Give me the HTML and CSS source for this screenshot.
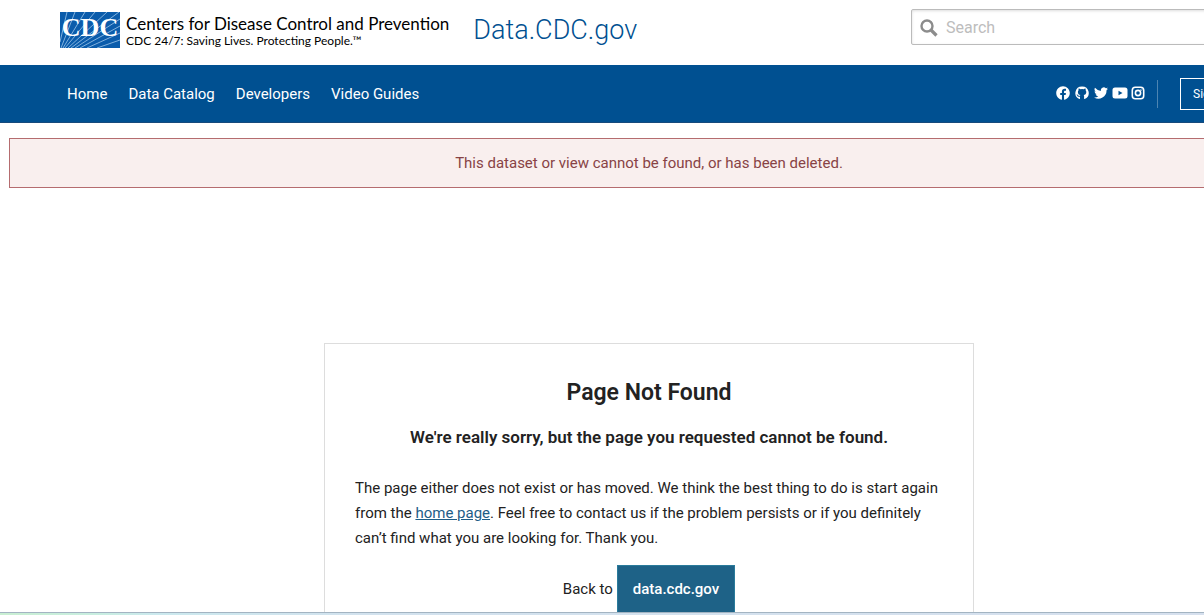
FILE: index.html
```html
<!DOCTYPE html>
<html lang="en">
<head>
<meta charset="utf-8">
<title>Data.CDC.gov</title>
<link rel="stylesheet" href="styles.css">
</head>
<body>
<div class="viewport">
<div class="page">
  <header class="masthead">
    <a class="brand" href="#">
      <svg class="logo" viewBox="0 0 60 36" aria-label="CDC">
        <rect width="60" height="36" fill="#0b5cab"/>
        <g stroke="#8fbbe3" stroke-width=".9">
          <path d="M0 30 7 0M1 36 15 0M3 36 25 0M5 36 35 0M8 36 47 0M11 36 59 0M15 36 60 7M20 36 60 14M27 36 60 21M37 36 60 28"/>
        </g>
        <text x="30" y="24" text-anchor="middle" class="logo-text">CDC</text>
      </svg>
      <span class="brand-lines">
        <span class="agency">Centers for Disease Control and Prevention</span>
        <span class="tagline">CDC 24/7: Saving Lives. Protecting People.™</span>
      </span>
      <span class="site-name">Data.CDC.gov</span>
    </a>
    <form class="search">
      <svg class="search-icon" viewBox="0 0 18 18" aria-hidden="true"><circle cx="7" cy="7" r="5.5" fill="none" stroke="#8c8c8c" stroke-width="2.4"/><path d="m11 11 5.5 5.5" stroke="#8c8c8c" stroke-width="3.2"/></svg>
      <input class="search-input" type="search" placeholder="Search" aria-label="Search">
    </form>
  </header>
  <nav class="navbar">
    <div class="nav-links">
      <a href="#">Home</a><a href="#">Data Catalog</a><a href="#">Developers</a><a href="#">Video Guides</a>
    </div>
    <div class="social">
      <a href="#" aria-label="Facebook"><svg viewBox="0 0 512 512"><path d="M504 256C504 119 393 8 256 8S8 119 8 256c0 124 91 226 209 245V328h-63v-72h63v-55c0-62 37-96 94-96 27 0 55 5 55 5v61h-31c-31 0-41 19-41 39v46h69l-11 72h-58v173c119-19 210-121 210-245z"/></svg></a>
      <a href="#" aria-label="GitHub"><svg viewBox="0 0 16 16"><path d="M8 .5a7.5 7.5 0 0 0-3 14.4c.4.1.7-.2.7-.6v-2c-2 .4-2.800-.6-3-1.300-.2-.5-.6-.9-.9-1.100.8-.4 1.500.2 1.800.7.5.8 1.300.9 2.100.6.1-.5.300-.8.5-1C4.500 10 3.300 9.200 3.300 6.900c0-.8.3-1.500.8-2-.1-.5-.2-1.200.1-2 .8-.1 1.600.4 2.100.8a7 7 0 0 1 3.600 0c.5-.4 1.300-.9 2.100-.8.300.8.2 1.500.1 2 .5.5.8 1.200.8 2 0 2.300-1.200 3.100-3 3.300.3.300.5.8.5 1.500v2.600c0 .4.3.7.7.600A7.500 7.500 0 0 0 8 .5z"/></svg></a>
      <a href="#" aria-label="Twitter"><svg viewBox="0 0 24 24"><path d="M24 4.600a10 10 0 0 1-2.800.8 5 5 0 0 0 2.200-2.700 10 10 0 0 1-3.100 1.200 4.900 4.900 0 0 0-8.400 4.500A14 14 0 0 1 1.700 3.200a4.900 4.900 0 0 0 1.500 6.500 5 5 0 0 1-2.200-.6 4.900 4.900 0 0 0 3.900 4.900 5 5 0 0 1-2.200.1 4.900 4.900 0 0 0 4.600 3.400A9.900 9.900 0 0 1 0 19.500a14 14 0 0 0 21.500-12.400A10 10 0 0 0 24 4.600z"/></svg></a>
      <a href="#" aria-label="YouTube" class="wide"><svg viewBox="0 0 16 14"><path fill-rule="evenodd" d="M3 1.500h10a2.500 2.500 0 0 1 2.500 2.500v6a2.500 2.500 0 0 1-2.500 2.500H3A2.500 2.500 0 0 1 .5 10V4A2.500 2.500 0 0 1 3 1.500zM6.500 4.700v4.600l4-2.300z"/></svg></a>
      <a href="#" aria-label="Instagram"><svg viewBox="0 0 14 14" class="outline"><rect x="1.300" y="1.300" width="11.400" height="11.400" rx="3"/><circle cx="7" cy="7" r="2.600"/><circle cx="10.300" cy="3.700" r=".2"/></svg></a>
    </div>
    <a class="sign-in" href="#">Sign In</a>
  </nav>
  <div class="alert" role="alert">This dataset or view cannot be found, or has been deleted.</div>
  <main class="card">
    <h1>Page Not Found</h1>
    <h2>We're really sorry, but the page you requested cannot be found.</h2>
    <p>The page either does not exist or has moved. We think the best thing to do is start again from the <a href="#">home page</a>. Feel free to contact us if the problem persists or if you definitely can’t find what you are looking for. Thank you.</p>
    <div class="back"><span>Back to</span><a class="button" href="#">data.cdc.gov</a></div>
  </main>
</div>
</div>
<div class="bottom-edge"></div>
</body>
</html>
```
FILE: styles.css
```css
* { box-sizing: border-box; }
body {
  margin: 0;
  height: 100vh;
  display: flex;
  flex-direction: column;
  overflow: hidden;
  background: #fff;
  color: #222;
  font: 15px/24px Roboto, sans-serif;
}
.viewport { flex: 1; min-height: 0; overflow: hidden; }
.page { min-width: 1298px; }
.masthead {
  height: 65px;
  padding: 9px 60px 0;
  display: flex;
  justify-content: space-between;
  align-items: flex-start;
}
.brand { display: flex; align-items: center; color: #000; text-decoration: none; padding-top: 1px; }
.logo { width: 60px; height: 36px; margin-right: 6px; }
.logo-text { font: bold 26px "Liberation Serif", serif; fill: #fff; }
.brand-lines { display: flex; flex-direction: column; font-family: Lato, sans-serif; margin-right: 24px; padding-top: 2px; }
.agency { font-size: 17px; line-height: 20px; }
.tagline { font-size: 12px; line-height: 14px; }
.site-name { font-size: 27px; line-height: 40px; font-weight: 300; color: #005091; }
.search {
  display: flex;
  align-items: center;
  gap: 8px;
  width: 327px;
  height: 36px;
  padding: 1px 8px 0;
  border: 1px solid #bbb;
  border-radius: 2px;
  box-shadow: inset 0 1px 3px #ddd;
}
.search-icon { width: 18px; height: 18px; }
.search-input { flex: 1; min-width: 0; border: 0; padding: 0; background: none; font: 16px/24px Roboto, sans-serif; outline: 0; }
.search-input::placeholder { color: #bdbdbd; opacity: 1; }
.navbar {
  height: 58px;
  padding: 1px 60px 0 67px;
  display: flex;
  align-items: center;
  background: #005091;
  border-bottom: 1px solid #174a7c;
}
.nav-links { display: flex; gap: 21px; flex: 1; }
.nav-links a { color: #fff; text-decoration: none; }
.social {
  display: flex;
  align-items: center;
  gap: 5px;
  height: 28px;
  padding-right: 12px;
  margin-right: 22px;
  border-right: 1px solid #4d85b2;
}
.social a { display: flex; width: 14px; margin-bottom: 3px; }
.social a.wide { width: 16px; margin: 0 -2px 3px -1px; }
.social svg { width: 100%; height: 14px; fill: #fff; }
.social .outline { fill: none; stroke: #fff; stroke-width: 1.6; }
.sign-in {
  width: 58px;
  height: 32px;
  padding-left: 12px;
  border: 1px solid #fff;
  color: #fff;
  font-size: 12px;
  line-height: 30px;
  text-decoration: none;
}
.alert {
  margin: 15px 9px 0;
  padding: 12px;
  border: 1px solid #b56c6f;
  background: #f9efee;
  color: #884345;
  text-align: center;
}
.card {
  width: 650px;
  margin: 155px auto 0;
  padding: 34px 30px 60px;
  border: 1px solid #ddd;
}
.card h1 { margin: 0; font-size: 23px; line-height: 30px; font-weight: 600; text-align: center; }
.card h2 { margin: 16px 0 26px; font-size: 17px; line-height: 26px; font-weight: 600; text-align: center; }
.card p { margin: 0 0 14px; line-height: 25px; }
.card p a { color: #1e5d87; }
.back { display: flex; justify-content: center; align-items: center; gap: 4px; }
.button {
  padding: 11px 15px;
  border: 1px solid #2a7b9b;
  background: #1e6287;
  color: #fff;
  font-weight: 500;
  text-decoration: none;
}
.bottom-edge {
  height: 3px;
  border-top: 1px solid #a3b4c2;
  background: linear-gradient(90deg, #c9efd2 0, #c8eee0 8%, #cbe9ee 13%, #d2e2ee 30%, #d6e0ee 100%);
}
```
